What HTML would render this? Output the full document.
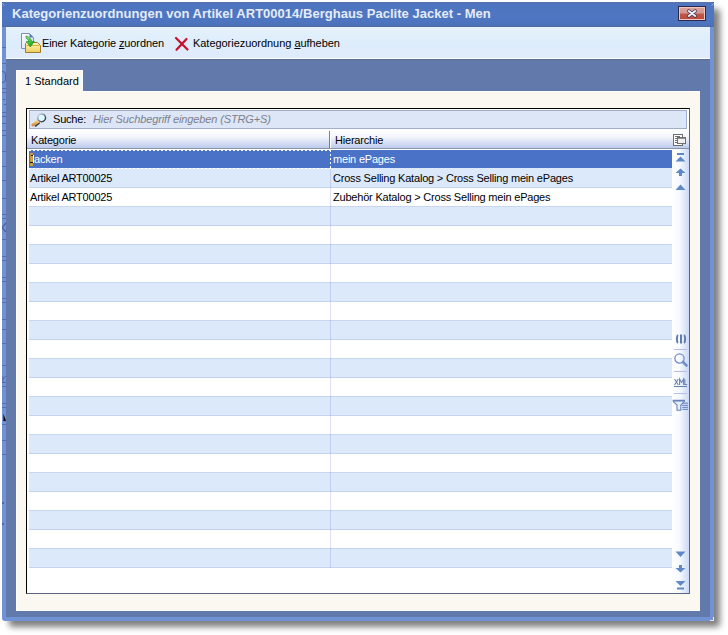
<!DOCTYPE html>
<html><head><meta charset="utf-8">
<style>
*{margin:0;padding:0;box-sizing:border-box}
html,body{width:728px;height:635px;overflow:hidden;background:#ffffff;font-family:"Liberation Sans",sans-serif;font-size:11px;color:#000}
.abs{position:absolute}
#shadow{left:9px;top:9px;width:711px;height:618px;background:rgba(0,0,0,0.5);filter:blur(3px);border-radius:3px}
#win{left:2px;top:2px;width:712px;height:619px;background:#7292d6;border-radius:0 0 0 3px}
#title{left:2px;top:2px;width:712px;height:25px;background:linear-gradient(#5a72a8 0px,#4e74bf 2px,#4e76c2 60%,#4d72bc 23px,#50689c 25px)}
#title .t{left:10px;top:4px;font-size:13px;font-weight:bold;color:#e4ecf8;white-space:nowrap;letter-spacing:0.02px}
#body{left:6px;top:27px;width:704px;height:590px;background:#6179ab}
#toolbar{left:6px;top:27px;width:704px;height:32px;background:linear-gradient(#e6f2fd,#ddedfa 50%,#e0ebfc);border-bottom:1px solid #f6fcff}
.tbline{left:6px;top:59px;width:704px;height:1px;background:#5c6c92}
.mk{left:2px;width:4px;height:1px;background:rgba(50,60,130,0.42)}
.tb{white-space:nowrap}
#tab{left:16px;top:70px;width:67px;height:22px;background:#faf8f1;border-top:1px solid #fff;border-left:1px solid #fff;border-right:1px solid #fcfcfa}
#panel{left:16px;top:91px;width:684px;height:520px;background:#faf8f1;border-left:1px solid #fff;border-top:1px solid #fff;border-bottom:1px solid #fff}
#grid{left:26px;top:108px;width:664px;height:486px;background:#fff;border:1px solid #000;border-right-color:#5a6480;border-bottom-color:#5a6480}
#search{left:29px;top:110px;width:658px;height:19px;background:#dde6f6;border:1px solid #a0aecc}
#hdr{left:27px;top:129px;width:662px;height:20px;background:linear-gradient(#ffffff 0%,#f4f6fb 40%,#bccbee 100%);border-bottom:1px solid #8694a6}
.hsep{left:329px;top:131px;width:1px;height:17px;background:#7a7e86;border-right:1px solid #fff;box-sizing:content-box}
.row{position:absolute;left:29px;width:643px;height:19px}
.alt{background:#dce9fb;border-bottom:1px solid #c4d3ef}
.wht{background:#fff;border-bottom:1px solid #c8d6f0}
.sel{background:#4a72c6;color:#fff}
.vsep{left:330px;top:169px;width:1px;height:399px;background:rgba(100,100,190,0.2)}
#nav{left:672px;top:149px;width:17px;height:444px;background:linear-gradient(90deg,#ffffff 0%,#f6f9fe 45%,#c8d8f4 100%)}
.cell{position:absolute;top:3px;white-space:nowrap;letter-spacing:-0.2px}
.focus{left:29px;top:150px;width:302px;height:19px;background:repeating-linear-gradient(90deg,#fff 0 2px,transparent 2px 4px) top/100% 1px no-repeat,repeating-linear-gradient(90deg,#fff 0 2px,transparent 2px 4px) bottom/100% 1px no-repeat,repeating-linear-gradient(180deg,#fff 0 2px,transparent 2px 4px) right/1px 100% no-repeat}
</style></head><body>
<div id="shadow" class="abs"></div>
<div id="win" class="abs"></div>
<div id="title" class="abs"><div class="t abs">Kategorienzuordnungen von Artikel ART00014/Berghaus Paclite Jacket - Men</div></div>
<svg class="abs" style="left:2px;top:2px" width="5" height="5"><rect x="0" y="0" width="1" height="1" fill="#34487e"/><path d="M0.4 1.2 L2.2 3.6" stroke="#9cc0f0" stroke-width="1" opacity="0.8"/></svg>
<svg class="abs" style="left:709px;top:2px" width="5" height="5"><rect x="4" y="0" width="1" height="1" fill="#34487e"/><path d="M4.6 1.2 L2.8 3.6" stroke="#9cc0f0" stroke-width="1" opacity="0.8"/></svg>
<svg class="abs" style="left:709px;top:616px" width="5" height="5"><path d="M4.5 1 V4.5 H1" stroke="#f4f8ff" stroke-width="1" fill="none" opacity="0.9"/></svg>
<!-- close button -->
<div class="abs" style="left:678px;top:6px;width:28px;height:15px;border:1px solid #2c2a4c;background:#f2c6c0;padding:1px">
  <div style="width:24px;height:11px;background:linear-gradient(#d9a09a 0,#d39690 5px,#c25848 6px,#b84c3e 11px)"></div>
</div>
<svg class="abs" style="left:686px;top:8px" width="12" height="11" viewBox="0 0 12 11">
  <path d="M2.8 3 L9.2 8 M9.2 3 L2.8 8" stroke="#3a3050" stroke-width="3.4" stroke-linecap="round"/>
  <path d="M2.8 3 L9.2 8 M9.2 3 L2.8 8" stroke="#eef2fa" stroke-width="2" stroke-linecap="round"/>
</svg>
<div id="body" class="abs"></div>
<div class="abs mk" style="top:47px"></div><div class="abs mk" style="top:63px"></div><div class="abs mk" style="top:88px"></div><div class="abs mk" style="top:92px"></div><div class="abs mk" style="top:112px"></div><div class="abs mk" style="top:130px"></div><div class="abs mk" style="top:135px"></div><div class="abs mk" style="top:151px"></div><div class="abs mk" style="top:166px"></div><div class="abs mk" style="top:180px"></div><div class="abs mk" style="top:198px"></div><div class="abs mk" style="top:214px"></div><div class="abs mk" style="top:218px"></div><div class="abs mk" style="top:239px"></div><div class="abs mk" style="top:256px"></div><div class="abs mk" style="top:260px"></div><div class="abs mk" style="top:277px"></div><div class="abs mk" style="top:281px"></div><div class="abs mk" style="top:298px"></div><div class="abs mk" style="top:302px"></div><div class="abs mk" style="top:319px"></div><div class="abs mk" style="top:329px"></div><div class="abs mk" style="top:343px"></div><div class="abs mk" style="top:365px"></div><div class="abs mk" style="top:382px"></div><div class="abs mk" style="top:386px"></div><div class="abs mk" style="top:403px"></div><div class="abs mk" style="top:407px"></div><div class="abs mk" style="top:424px"></div><div class="abs mk" style="top:440px"></div><div class="abs mk" style="top:454px"></div>
<div class="abs" style="left:2px;top:71px;width:4px;height:12px;border:1.2px solid rgba(50,60,130,0.55);border-left:none;border-radius:0 5px 5px 0"></div>
<div class="abs" style="left:2px;top:116px;width:4px;height:8px;border-top:1px solid rgba(50,60,130,0.5);border-bottom:1px solid rgba(50,60,130,0.5)"></div>
<div class="abs" style="left:3px;top:99px;width:2px;height:1px;background:rgba(50,60,130,0.5)"></div>
<div class="abs" style="left:4px;top:104px;width:2px;height:1px;background:rgba(50,60,130,0.5)"></div>
<svg class="abs" style="left:2px;top:222px" width="5" height="11"><path d="M0 5.5 L4 1 M0 5.5 L4 10" stroke="rgba(50,60,130,0.6)" stroke-width="1.2"/></svg>
<svg class="abs" style="left:2px;top:375px" width="5" height="9"><path d="M1 1 V8 M1 4 L4 1" stroke="rgba(50,60,130,0.45)" stroke-width="1"/></svg>
<svg class="abs" style="left:2px;top:413px" width="5" height="9"><path d="M1.5 1 V8 H4" stroke="rgba(50,60,130,0.45)" stroke-width="1"/></svg>
<div class="abs" style="left:2px;top:502px;width:2px;height:2px;background:rgba(50,60,130,0.5)"></div>
<div class="abs" style="left:2px;top:523px;width:2px;height:2px;background:rgba(50,60,130,0.5)"></div>

<div id="toolbar" class="abs"></div>
<div class="abs tbline"></div>
<!-- toolbar icon 1 -->
<svg class="abs" style="left:18px;top:30px" width="26" height="26" viewBox="0 0 26 26">
  <defs>
    <linearGradient id="docg" x1="0" y1="0" x2="1" y2="1"><stop offset="0" stop-color="#ffffff"/><stop offset="1" stop-color="#cdd8f0"/></linearGradient>
    <linearGradient id="fold" x1="0" y1="0" x2="0" y2="1"><stop offset="0" stop-color="#fff6b8"/><stop offset="0.5" stop-color="#f8e488"/><stop offset="1" stop-color="#eccc5c"/></linearGradient>
    <linearGradient id="arr" x1="0" y1="0" x2="1" y2="1"><stop offset="0" stop-color="#a8e890"/><stop offset="0.5" stop-color="#3cc038"/><stop offset="1" stop-color="#129a1c"/></linearGradient>
  </defs>
  <path d="M3.5 3.5 H11.5 L15.5 7.5 V18.5 H3.5 Z" fill="url(#docg)" stroke="#8090b4" stroke-width="1"/>
  <path d="M11.5 3.5 L15.5 7.5 H11.5 Z" fill="#5878c4"/>
  <path d="M7.5 13.5 L8.5 12.5 H19.5 L22.5 15.5 V22.5 H7.5 Z" fill="url(#fold)" stroke="#9c7e2c" stroke-width="1"/>
  <path d="M8.5 15.5 H21.5" stroke="#d8b040" stroke-width="1"/>
  <path d="M8 6 C10.5 6.3 13 8.5 13.8 11.5 L16.3 11.5 L12.3 17 L8.3 11.5 L10.8 11.5 C10.3 10 9.3 8.8 8 8.3 Z" fill="url(#arr)" stroke="#1e8a22" stroke-width="0.6"/>
</svg>
<div class="abs tb" style="left:42px;top:37px;letter-spacing:-0.12px">Einer Kategorie <u>z</u>uordnen</div>
<svg class="abs" style="left:172px;top:35px" width="20" height="18" viewBox="0 0 20 18">
  <path d="M4 3 L15.5 14.5 M14.5 4 L4.5 14.8" stroke="#c8102e" stroke-width="2.2" stroke-linecap="round"/>
</svg>
<div class="abs tb" style="left:193px;top:37px;letter-spacing:-0.04px">Kategoriezuordnung <u>a</u>ufheben</div>
<div id="panel" class="abs"></div>
<div id="tab" class="abs"></div>
<div class="abs" style="left:25px;top:75px;white-space:nowrap;letter-spacing:0px">1 Standard</div>
<div id="grid" class="abs"></div>
<div id="search" class="abs"></div>
<svg class="abs" style="left:30px;top:111px" width="18" height="17" viewBox="0 0 18 17">
  <defs><linearGradient id="ring" x1="0.1" y1="0.1" x2="0.9" y2="0.9"><stop offset="0" stop-color="#c4d4e4"/><stop offset="0.45" stop-color="#7a8898"/><stop offset="1" stop-color="#2e343c"/></linearGradient>
  <linearGradient id="hand" x1="0" y1="0" x2="0" y2="1"><stop offset="0" stop-color="#f8c878"/><stop offset="1" stop-color="#d89040"/></linearGradient></defs>
  <path d="M5.5 15 L9.2 12.2" stroke="#3c3c40" stroke-width="1.6" stroke-linecap="round"/>
  <path d="M2.8 14 L8.2 10.2" stroke="url(#hand)" stroke-width="3" stroke-linecap="round"/>
  <circle cx="11.6" cy="6.8" r="3.9" fill="#dcfaff" stroke="url(#ring)" stroke-width="1.5"/>
  <path d="M9.6 5.8 A2.3 2.3 0 0 1 11.2 4.3" stroke="#ffffff" stroke-width="1" fill="none"/>
</svg>
<div class="abs" style="left:53px;top:113px;letter-spacing:-0.2px">Suche:</div>
<div class="abs" style="left:93px;top:113px;font-style:italic;color:#7c808c;white-space:nowrap;letter-spacing:-0.12px">Hier Suchbegriff eingeben (STRG+S)</div>
<div id="hdr" class="abs"></div>
<div class="abs hsep"></div>
<div class="abs" style="left:31px;top:134px;letter-spacing:-0.2px">Kategorie</div>
<div class="abs" style="left:335px;top:134px;letter-spacing:-0.2px">Hierarchie</div>
<svg class="abs" style="left:672px;top:133px" width="16" height="14" viewBox="0 0 16 14">
  <rect x="1.5" y="1.5" width="9" height="11" fill="#fff" stroke="#6e6e6e"/>
  <path d="M3 3.5 H8 M3 5.5 H8 M3 7.5 H8 M3 9.5 H8" stroke="#6e6e6e" stroke-width="1"/>
  <rect x="5.5" y="4.5" width="8" height="6" fill="#f0eeee" stroke="#6e6e6e"/>
  <path d="M5.5 5 H13.5" stroke="#6e6e6e" stroke-width="1.5"/>
</svg>
<div id="rows">
<div class="row sel" style="top:150px;height:19px;border-bottom:1px solid #dde9f9"><div class="cell" style="left:5px">acken</div><div class="cell" style="left:304px">mein ePages</div></div>
<div class="row alt" style="top:169px"><div class="cell" style="left:1px">Artikel ART00025</div><div class="cell" style="left:304px">Cross Selling Katalog &gt; Cross Selling mein ePages</div></div>
<div class="row wht" style="top:188px"><div class="cell" style="left:1px">Artikel ART00025</div><div class="cell" style="left:304px">Zubehör Katalog &gt; Cross Selling mein ePages</div></div>
<div class="row alt" style="top:207px"></div>
<div class="row wht" style="top:226px"></div>
<div class="row alt" style="top:245px"></div>
<div class="row wht" style="top:264px"></div>
<div class="row alt" style="top:283px"></div>
<div class="row wht" style="top:302px"></div>
<div class="row alt" style="top:321px"></div>
<div class="row wht" style="top:340px"></div>
<div class="row alt" style="top:359px"></div>
<div class="row wht" style="top:378px"></div>
<div class="row alt" style="top:397px"></div>
<div class="row wht" style="top:416px"></div>
<div class="row alt" style="top:435px"></div>
<div class="row wht" style="top:454px"></div>
<div class="row alt" style="top:473px"></div>
<div class="row wht" style="top:492px"></div>
<div class="row alt" style="top:511px"></div>
<div class="row wht" style="top:530px"></div>
<div class="row alt" style="top:549px"></div>
</div>
<div class="abs vsep"></div>
<div class="abs focus"></div>
<!-- caret J -->
<div class="abs" style="left:30px;top:153px;width:3px;height:13px;background:linear-gradient(90deg,#b88a30,#d8aa50 60%,#c09040)"></div>
<div class="abs" style="left:31px;top:155px;width:2px;height:1px;background:#1a1208"></div>
<div class="abs" style="left:30px;top:162px;width:3px;height:1px;background:#1a1208"></div>
<div class="abs" style="left:33px;top:155px;width:1px;height:8px;background:#f0f4fc"></div>
<div id="nav" class="abs"></div>
<svg class="abs" style="left:672px;top:149px" width="17" height="444" viewBox="0 0 17 444">
  <g fill="#5f88c8">
    <rect x="5" y="4" width="7" height="2"/>
    <path d="M3.5 12.5 L8.5 7.5 L13.5 12.5 Z"/>
    <path d="M3.5 24 L8.5 19.5 L13.5 24 H10 V27 H7 V24 Z"/>
    <path d="M3.5 41 L8.5 35.5 L13.5 41 Z"/>
    <path d="M3.5 402.5 L8.5 408 L13.5 402.5 Z"/>
    <path d="M3.5 419 L8.5 423.5 L13.5 419 H10 V416 H7 V419 Z"/>
    <path d="M3.5 432 L8.5 437 L13.5 432 Z"/>
    <rect x="5" y="438.5" width="7" height="2"/>
  </g>
  <g fill="none" stroke="#5f7db2">
    <path d="M6 186 C4.5 187 4.5 193 6 194 M9 185.5 V194.5 M12 186 C13.5 187 13.5 193 12 194" stroke-width="2"/>
  </g>
  <path d="M2 200.5 H15" stroke="#b8bce0" stroke-width="1"/>
  <g fill="none" stroke="#7290c8">
    <circle cx="7.5" cy="209.5" r="4.6" stroke-width="1.3"/>
    <path d="M11 213 L14.5 216.5" stroke-width="2.6" stroke-linecap="round"/>
  </g>
  <path d="M2 222.5 H15" stroke="#b8bce0" stroke-width="1"/>
  <g fill="none" stroke="#6a82b6" stroke-width="1.1">
    <path d="M2.5 230 L6.3 236 M6.3 230 L2.5 236"/>
    <path d="M7.6 236 V230 L9.6 233.5 L11.6 230 V236"/>
    <path d="M12.8 230 V235.5 H15.2"/>
  </g>
  <path d="M2 237.5 H15" stroke="#6a82b6" stroke-width="1.1"/>
  <path d="M2 244.5 H15" stroke="#b8bce0" stroke-width="1"/>
  <path d="M1.2 251.2 H12.4 V252.6 L8.8 256 V261.2 H5 V256 L1.2 252.6 Z" fill="#e8eef9" stroke="#6a84b8" stroke-width="1.1"/>
  <path d="M1.2 251.8 H12.4" stroke="#6a84b8" stroke-width="1.6"/>
  <g fill="#6a88c0">
    <rect x="10.2" y="253.6" width="5.8" height="1.1"/>
    <rect x="10.2" y="255.8" width="5.8" height="1.1"/>
    <rect x="10.2" y="257.8" width="5.8" height="1.1"/>
    <rect x="10.2" y="259.8" width="5.8" height="1.1"/>
  </g>
</svg>
</body></html>
